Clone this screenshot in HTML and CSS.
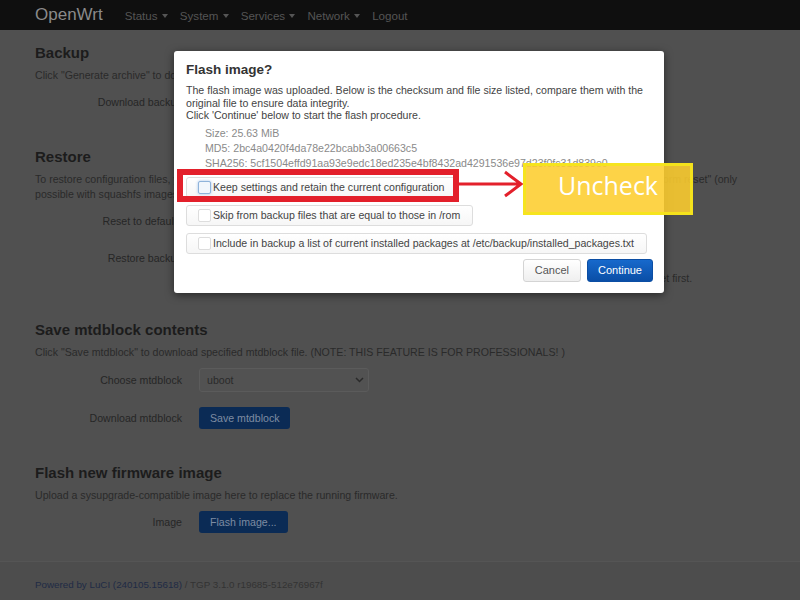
FILE: index.html
```html
<!DOCTYPE html>
<html lang="en">
<head>
  <meta charset="UTF-8">
  <title>Backup / Flash Firmware - LuCI</title>

  <link rel="stylesheet" href="styles.css">
</head>
<body>
  <header class="top">
    <span class="brand">OpenWrt</span>
    <ul class="nav">
      <li>Status <span class="caret"></span></li>
      <li>System <span class="caret"></span></li>
      <li>Services <span class="caret"></span></li>
      <li>Network <span class="caret"></span></li>
      <li>Logout</li>
    </ul>
  </header>

  <main class="container">
    <section class="cbi-section">
      <h2>Backup</h2>
      <p class="desc">Click "Generate archive" to download a tar archive of the current configuration files.</p>
      <div class="rows">
        <div class="row">
          <label>Download backup</label>
          <div class="field"><button class="btn">Generate archive</button></div>
        </div>
      </div>
    </section>

    <section class="cbi-section">
      <h2>Restore</h2>
      <p class="desc">To restore configuration files, you can upload a previously generated backup archive here. To reset the firmware to defaults, click "Perform reset" (only possible with squashfs images).</p>
      <div class="rows">
        <div class="row">
          <label>Reset to defaults</label>
          <div class="field"><button class="btn danger">Perform reset</button></div>
        </div>
        <div class="row">
          <label>Restore backup</label>
          <div class="field">
            <button class="btn">Upload archive...</button>
            <div class="help">Custom files (certificates, scripts) may remain on the system. To prevent this, perform a factory-reset first.</div>
          </div>
        </div>
      </div>
    </section>

    <section class="cbi-section">
      <h2>Save mtdblock contents</h2>
      <p class="desc">Click "Save mtdblock" to download specified mtdblock file. (NOTE: THIS FEATURE IS FOR PROFESSIONALS! )</p>
      <div class="rows">
        <div class="row">
          <label>Choose mtdblock</label>
          <div class="field">
            <div class="select">uboot
              <svg width="9" height="6" viewBox="0 0 9 6"><path d="M1 1l3.5 3.5L8 1" fill="none" stroke="currentColor" stroke-width="1.5"/></svg>
            </div>
          </div>
        </div>
        <div class="row">
          <label>Download mtdblock</label>
          <div class="field"><button class="btn">Save mtdblock</button></div>
        </div>
      </div>
    </section>

    <section class="cbi-section">
      <h2>Flash new firmware image</h2>
      <p class="desc">Upload a sysupgrade-compatible image here to replace the running firmware.</p>
      <div class="rows">
        <div class="row">
          <label>Image</label>
          <div class="field"><button class="btn">Flash image...</button></div>
        </div>
      </div>
    </section>
  </main>

  <footer class="footer">
    <a href="#">Powered by LuCI (240105.15618)</a> / TGP 3.1.0 r19685-512e76967f
  </footer>

  <div class="modal">
    <h4>Flash image?</h4>
    <p>The flash image was uploaded. Below is the checksum and file size listed, compare them with the original file to ensure data integrity.<br>Click 'Continue' below to start the flash procedure.</p>
    <ul class="sums">
      <li>Size: 25.63 MiB</li>
      <li>MD5: 2bc4a0420f4da78e22bcabb3a00663c5</li>
      <li>SHA256: 5cf1504effd91aa93e9edc18ed235e4bf8432ad4291536e97d23f0fc31d839e0</li>
    </ul>
    <div class="opts">
      <label class="opt"><input type="checkbox" class="focus"> Keep settings and retain the current configuration</label>
      <label class="opt"><input type="checkbox"> Skip from backup files that are equal to those in /rom</label>
      <label class="opt"><input type="checkbox"> Include in backup a list of current installed packages at /etc/backup/installed_packages.txt</label>
    </div>
    <div class="actions">
      <button class="btn-modal">Cancel</button>
      <button class="btn-modal primary">Continue</button>
    </div>
  </div>

  <!-- annotation drawn over the screenshot -->
  <div class="mark"></div>
  <svg class="arrow" width="66" height="30" viewBox="0 0 66 30">
    <path d="M0 14H61M46 2L62 14L46 26" fill="none" stroke="#e3202b" stroke-width="3"/>
  </svg>
  <div class="callout">Uncheck</div>
</body>
</html>
```

FILE: styles.css
```css
html {
  box-sizing: border-box;
  font-family: "Liberation Sans", Arial, sans-serif;
}
*, *::before, *::after {
  box-sizing: inherit;
}

/* page colours as seen behind the modal backdrop */
body {
  margin: 0;
  min-height: 100vh;
  background: #505050;
  color: #2a2a2a;
  font-size: 10.6px;
  overflow: hidden;
}

.top {
  height: 30px;
  background: #0f0f0f;
  display: flex;
  align-items: center;
  padding-left: 35px;
}
.brand {
  font-size: 17px;
  color: #8a8a8a;
  margin-right: 22px;
}
.nav {
  list-style: none;
  margin: 0;
  padding: 0;
  display: flex;
  gap: 12px;
  font-size: 11.6px;
  color: #555;
}
.caret {
  display: inline-block;
  width: 0;
  height: 0;
  margin-left: 1px;
  vertical-align: middle;
  border-top: 4px solid #555;
  border-left: 3.5px solid transparent;
  border-right: 3.5px solid transparent;
}

.container {
  padding: 0 35px;
}
.cbi-section {
  margin-top: 34px;
}
.cbi-section:first-child {
  margin-top: 13px;
}
h2 {
  margin: 0;
  font-size: 15px;
  line-height: 20px;
  color: #1c1c1c;
}
.desc {
  margin: 5px 0 0;
  line-height: 15px;
}
.rows {
  margin-top: 8px;
  display: flex;
  flex-direction: column;
  gap: 15px;
}
.row {
  display: flex;
  align-items: flex-start;
  gap: 17px;
}
.row label {
  width: 147px;
  flex: none;
  text-align: right;
  line-height: 22px;
  color: #262626;
}
.field {
  line-height: 15px;
}
.row:has(.select) label {
  line-height: 24px;
}
.help {
  margin-top: 2px;
}
.btn {
  height: 22px;
  padding: 0 11px;
  border: 0;
  border-radius: 3px;
  background: #0b2b55;
  color: #7e8ca2;
  font: 10.6px "Liberation Sans", Arial, sans-serif;
}
.btn.danger {
  background: #4a1414;
}
.select {
  width: 170px;
  height: 24px;
  padding: 0 4px 0 7px;
  display: flex;
  align-items: center;
  justify-content: space-between;
  background: #525252;
  border: 1px solid #5b5b5b;
  border-radius: 3px;
}

.footer {
  margin-top: 28px;
  padding: 15px 35px;
  line-height: 15px;
  font-size: 9.8px;
  border-top: 1px solid #555;
  background: #4d4d4d;
  color: #333;
}
.footer a {
  color: #1f2b45;
  text-decoration: none;
}

/* modal */
.modal {
  position: absolute;
  left: 174px;
  top: 51px;
  width: 490px;
  padding: 10px 11px 11px 12px;
  background: #fff;
  border-radius: 3px;
  box-shadow: 0 2px 8px rgba(0,0,0,.5);
  color: #444;
  font-size: 10.6px;
}
.modal h4 {
  margin: 0;
  font-size: 13.5px;
  line-height: 18px;
  color: #333;
}
.modal p {
  margin: 5px 0 0;
  line-height: 12.5px;
}
.sums {
  list-style: none;
  margin: 4px 0 0;
  padding-left: 19px;
  line-height: 15px;
  color: #8a8a8a;
}
.opts {
  margin-top: 6px;
  display: flex;
  flex-direction: column;
  align-items: flex-start;
  gap: 7px;
}
.opt {
  display: flex;
  align-items: center;
  height: 21px;
  padding: 0 12px 0 11px;
  white-space: nowrap;
  border: 1px solid #ddd;
  border-radius: 3px;
  background: linear-gradient(#fff, #f6f6f6);
}
.opt input {
  appearance: none;
  width: 13px;
  height: 13px;
  margin: 0 2px 0 0;
  border: 1px solid #ddd;
  border-radius: 2px;
  background: #fff;
}
.opt input.focus {
  border-color: #8fb3da;
  background: #f1f6fc;
  box-shadow: 0 0 3px rgba(102,155,225,.6);
}
.actions {
  margin-top: 5px;
  display: flex;
  justify-content: flex-end;
  gap: 6px;
}
.btn-modal {
  height: 23px;
  padding: 0 11px;
  border: 1px solid #d4d4d4;
  border-radius: 3px;
  background: linear-gradient(#fff, #efefef);
  color: #555;
  font: 11px "Liberation Sans", Arial, sans-serif;
}
.btn-modal.primary {
  padding: 0 10px;
  border-color: #0b4ea4;
  background: linear-gradient(#1769cc, #0a4ea6);
  color: #fff;
}

/* annotation */
.mark {
  position: absolute;
  left: 177px;
  top: 169px;
  width: 282px;
  height: 33px;
  border: 6px solid #e3202b;
}
.arrow {
  position: absolute;
  left: 459px;
  top: 170px;
}
.callout {
  position: absolute;
  left: 523px;
  top: 163px;
  width: 170px;
  height: 52px;
  padding-bottom: 8px;
  display: flex;
  align-items: center;
  justify-content: center;
  border: 3px solid rgba(245,230,25,.9);
  background: rgba(253,205,45,.88);
  color: #fff;
  font: 25px "Open Sans", sans-serif;
}
```
